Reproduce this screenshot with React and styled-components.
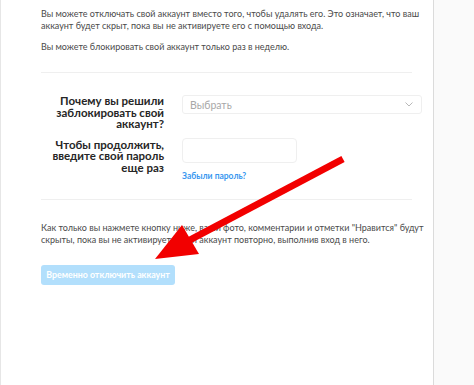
import React from 'react'
import styled, { createGlobalStyle } from 'styled-components'

const GlobalStyle = createGlobalStyle`
  html, body {
    margin: 0;
    padding: 0;
    background: #fafafa;
    font-family: Lato, "Open Sans", "Noto Sans", sans-serif;
  }
`

const Page = styled.div`
  position: relative;
  display: flex;
  width: 474px;
  height: 385px;
  overflow: hidden;
`

const Panel = styled.main`
  box-sizing: border-box;
  width: 434px;
  height: 100%;
  background: #fff;
  border-left: 1px solid #e6e6e6;
  border-right: 1px solid #dbdbdb;
  box-shadow: 1px 0 2px rgba(0, 0, 0, 0.04);
  padding: 8px 21px 0 40px;
`

const Side = styled.aside`
  flex: 1;
  background: #fafafa;
`

const Text = styled.p`
  margin: 0 0 ${p => p.gap || 0}px;
  font-size: 9px;
  line-height: 12px;
  color: #4a4a4a;
  white-space: nowrap;
`

const Divider = styled.hr`
  border: 0;
  border-top: 1px solid #efefef;
  margin: ${p => p.top}px 0 ${p => p.bottom}px;
`

const Row = styled.div`
  display: grid;
  grid-template-columns: 123px 1fr;
  column-gap: 18px;
  margin-bottom: ${p => p.gap || 0}px;
`

const Label = styled.label`
  text-align: right;
  font-size: 11.5px;
  font-weight: 700;
  line-height: 11.5px;
  color: #262626;
  padding-top: ${p => p.offset || 0}px;
`

const Field = styled.div`
  display: flex;
  flex-direction: column;
  align-items: flex-start;
`

const Select = styled.div`
  box-sizing: border-box;
  width: 240px;
  height: 19px;
  border: 1px solid #efefef;
  border-radius: 3px;
  display: flex;
  align-items: center;
  justify-content: space-between;
  padding: 0 8px 0 7px;
  font-size: 10.5px;
  color: #a8a8a8;
`

const Input = styled.div`
  box-sizing: border-box;
  width: 115px;
  height: 25px;
  border: 1px solid #efefef;
  border-radius: 4px;
  background: #fff;
`

const Link = styled.a`
  margin-top: 8px;
  font-size: 8.5px;
  font-weight: 700;
  color: #3897f0;
  text-decoration: none;
`

const Button = styled.button`
  margin-top: 19px;
  height: 20px;
  padding: 0;
  width: 134px;
  border: 0;
  border-radius: 3px;
  background: #b2dffc;
  color: #fff;
  font-family: inherit;
  font-size: 8.8px;
  font-weight: 700;
  white-space: nowrap;
`

const Arrow = styled.svg`
  position: absolute;
  left: 0;
  top: 0;
  pointer-events: none;
`

const Chevron = () => (
  <svg width="8" height="5" viewBox="0 0 8 5">
    <path d="M0.5 0.5 L4 4 L7.5 0.5" fill="none" stroke="#b0b0b0" strokeWidth="0.9" />
  </svg>
)

export default function App() {
  return (
    <>
      <GlobalStyle />
      <Page>
        <Panel>
          <Text gap={9}>
            Вы можете отключать свой аккаунт вместо того, чтобы удалять его. Это означает, что ваш
            <br />
            аккаунт будет скрыт, пока вы не активируете его с помощью входа.
          </Text>
          <Text>Вы можете блокировать свой аккаунт только раз в неделю.</Text>
          <Divider top={19} bottom={22} />
          <Row gap={8}>
            <Label>Почему вы решили заблокировать свой аккаунт?</Label>
            <Field>
              <Select>
                <span>Выбрать</span>
                <Chevron />
              </Select>
            </Field>
          </Row>
          <Row>
            <Label offset={1}>Чтобы продолжить, введите свой пароль еще раз</Label>
            <Field>
              <Input />
              <Link href="#">Забыли пароль?</Link>
            </Field>
          </Row>
          <Divider top={18} bottom={22} />
          <Text>
            Как только вы нажмете кнопку ниже, ваши фото, комментарии и отметки "Нравится" будут
            <br />
            скрыты, пока вы не активируете свой аккаунт повторно, выполнив вход в него.
          </Text>
          <Button>Временно отключить аккаунт</Button>
        </Panel>
        <Side />
        <Arrow width="474" height="385" viewBox="0 0 474 385">
          <line x1="343" y1="159" x2="186" y2="242" stroke="#f20000" strokeWidth="7" />
          <polygon points="155,259 199,254 182,225" fill="#f20000" />
        </Arrow>
      </Page>
    </>
  )
}
